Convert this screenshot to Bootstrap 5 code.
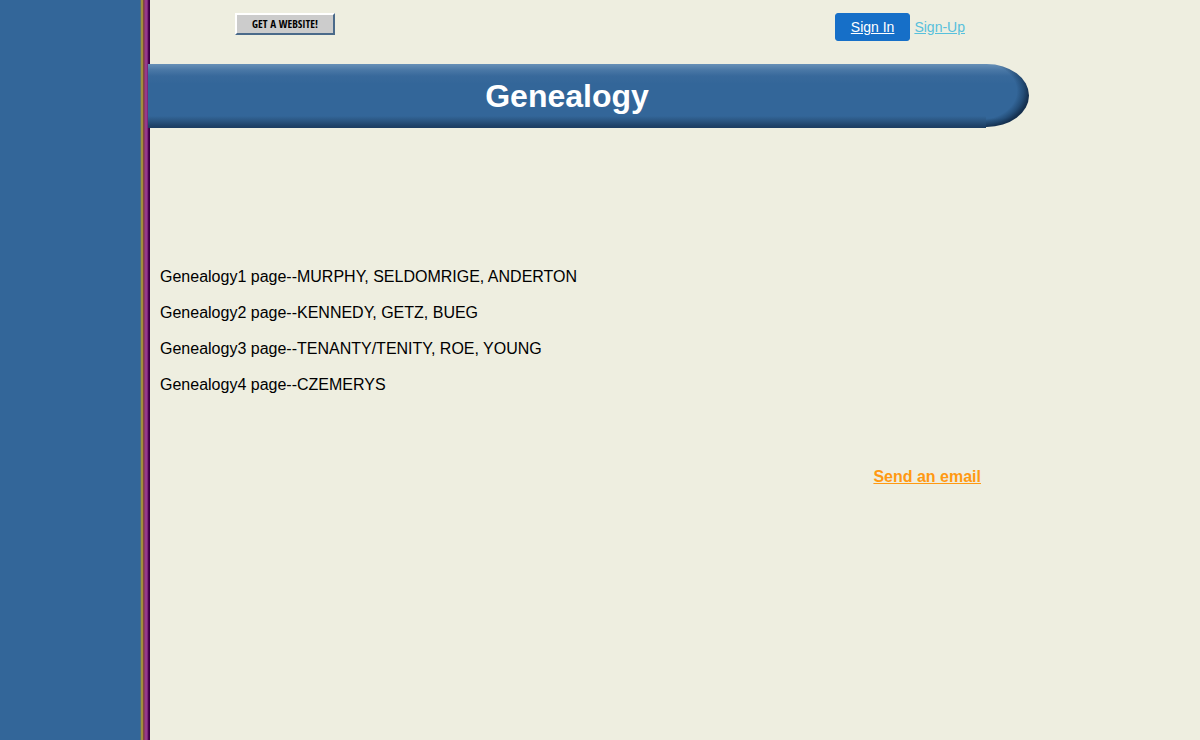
<!DOCTYPE html>
<html lang="en">
<head>
<meta charset="utf-8">
<meta name="viewport" content="width=device-width, initial-scale=1">
<title>Genealogy</title>
<link href="https://cdn.jsdelivr.net/npm/bootstrap@5.3.0/dist/css/bootstrap.min.css" rel="stylesheet">
<style>
body { background: #eeeee0; color: #000; font-family: "Liberation Sans", Arial, sans-serif; font-size: 16px; line-height: 20px; }
.side { width: 150px; background: linear-gradient(to right, #336699 140px, #5a7078 140px 141px, #9c9440 141px 142px, #a88c3c 142px 143px, #7c4a40 143px 144px, #8a3c60 144px 145px, #963a8c 145px 147px, #7c2878 147px 148px, #4a0450 148px 149px, #3a0040 149px 150px); }
.page { max-width: 881px; margin-left: -2px; }
.topbar { height: 64px; padding: 13px 64px 0 87px; }
.site-btn { width: 100px; height: 22px; background: #ccc; border: 2px solid; border-color: #fff #4a6a8a #4a6a8a #fff; color: #000; font: bold 11px/18px "Open Sans Condensed", "Liberation Sans Narrow", "Liberation Sans", sans-serif; }
.signin { --bs-btn-color: #fff; --bs-btn-bg: #166fc8; --bs-btn-border-color: #166fc8; --bs-btn-hover-color: #fff; --bs-btn-hover-bg: #125ca6; --bs-btn-font-size: 14px; --bs-btn-line-height: 20px; --bs-btn-padding-x: 15px; --bs-btn-padding-y: 3px; --bs-btn-border-radius: 3px; }
.signup { color: #57c0dc; font-size: 14px; }
.banner { height: 64px; }
.banner-bar, .banner-cap { background: linear-gradient(#6790b7, #4a78a6 6px, #38699b 12px, #336699 20px, #336699 52px, #2a5580 57px, #1e4167 62px, #1c3d60); }
.banner-bar h1 { font-size: 32px; line-height: 64px; }
.banner-cap { width: 43px; height: 63px; border-radius: 0 43px 43px 0 / 0 32px 32px 0; background: radial-gradient(51px 38px at -8px 27px, #16375a00 76%, #16375a88 89%, #142f4e), linear-gradient(#6790b7, #4a78a6 6px, #38699b 12px, #336699 20px, #336699 54px, #2a5580 59px, #1e4167 63px); }
.entries { padding: 139px 12px 0; }
.mail { color: #ff9912; }
.mail-row { padding: 72px 48px 0 0; }
</style>
</head>
<body>
<div class="d-flex min-vh-100">
  <aside class="side flex-shrink-0"></aside>
  <div class="page flex-grow-1">
    <header class="topbar d-flex justify-content-between align-items-start">
      <button type="button" class="site-btn p-0">GET A WEBSITE!</button>
      <nav class="d-flex align-items-center gap-1" aria-label="Account">
        <a class="btn signin text-decoration-underline" href="#signin">Sign In</a>
        <a class="signup" href="#signup">Sign-Up</a>
      </nav>
    </header>
    <div class="banner d-flex">
      <div class="banner-bar flex-grow-1 text-center"><h1 class="m-0 fw-bold text-white">Genealogy</h1></div>
      <div class="banner-cap flex-shrink-0"></div>
    </div>
    <main>
      <div class="entries">
        <p>Genealogy1 page--MURPHY, SELDOMRIGE, ANDERTON</p>
        <p>Genealogy2 page--KENNEDY, GETZ, BUEG</p>
        <p>Genealogy3 page--TENANTY/TENITY, ROE, YOUNG</p>
        <p class="mb-0">Genealogy4 page--CZEMERYS</p>
      </div>
      <div class="mail-row text-end"><a class="mail fw-bold" href="mailto:family@example.com">Send an email</a></div>
    </main>
  </div>
</div>
<script src="https://cdn.jsdelivr.net/npm/bootstrap@5.3.0/dist/js/bootstrap.bundle.min.js"></script>
</body>
</html>
